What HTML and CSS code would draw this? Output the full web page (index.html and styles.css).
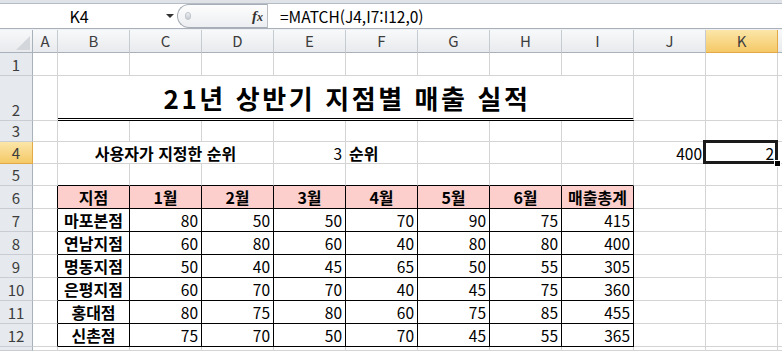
FILE: index.html
```html
<!DOCTYPE html>
<html lang="ko">
<head>
    <meta charset="UTF-8">
    <meta name="viewport" content="width=device-width, initial-scale=1.0">
    <title>21년 상반기 지점별 매출 실적</title>
    <link rel="stylesheet" href="styles.css">
</head>
<body>
    <div class="topband"></div>
    <div class="formula-bar">
        <div class="name-box">
            <span class="name-text">K4</span>
            <span class="dropdown"></span>
        </div>
        <div class="fx-pill">
            <span class="knob"></span>
            <span class="fx">f<span class="fx-x">x</span></span>
        </div>
        <div class="formula">=MATCH(J4,I7:I12,0)</div>
    </div>
    <div class="bar-gap"></div>

    <div class="sheet">
        <!-- column headers -->
        <div class="corner">
            <svg width="14" height="14" viewBox="0 0 14 14"><polygon points="14,0 14,14 0,14" fill="#d3d7dc"/></svg>
        </div>
        <div class="ch">A</div>
        <div class="ch">B</div>
        <div class="ch">C</div>
        <div class="ch">D</div>
        <div class="ch">E</div>
        <div class="ch">F</div>
        <div class="ch">G</div>
        <div class="ch">H</div>
        <div class="ch">I</div>
        <div class="ch">J</div>
        <div class="ch sel">K</div>
        <div class="ch"></div>

        <!-- row 1 -->
        <div class="rh">1</div>
        <div></div><div></div><div></div><div></div><div></div><div></div>
        <div></div><div></div><div></div><div></div><div></div><div></div>

        <!-- row 2 -->
        <div class="rh">2</div>
        <div></div>
        <div class="title">21년 상반기 지점별 매출 실적</div>
        <div></div><div></div><div></div>

        <!-- row 3 -->
        <div class="rh">3</div>
        <div></div><div></div><div></div><div></div><div></div><div></div>
        <div></div><div></div><div></div><div></div><div></div><div></div>

        <!-- row 4 -->
        <div class="rh sel">4</div>
        <div></div>
        <div class="label">사용자가 지정한 순위</div>
        <div class="num">3</div>
        <div class="bold">순위</div>
        <div></div><div></div><div></div>
        <div class="num">400</div>
        <div class="num current">2</div>
        <div></div>

        <!-- row 5 -->
        <div class="rh">5</div>
        <div></div>
        <div class="above"></div><div class="above"></div><div class="above"></div><div class="above"></div>
        <div class="above"></div><div class="above"></div><div class="above"></div><div class="above"></div>
        <div></div><div></div><div></div>

        <!-- row 6 -->
        <div class="rh">6</div>
        <div class="edge"></div>
        <div class="th tb">지점</div>
        <div class="th tb">1월</div>
        <div class="th tb">2월</div>
        <div class="th tb">3월</div>
        <div class="th tb">4월</div>
        <div class="th tb">5월</div>
        <div class="th tb">6월</div>
        <div class="th tb">매출총계</div>
        <div></div><div></div><div></div>

        <!-- row 7 -->
        <div class="rh">7</div>
        <div class="edge"></div>
        <div class="name tb">마포본점</div>
        <div class="num tb">80</div><div class="num tb">50</div><div class="num tb">50</div>
        <div class="num tb">70</div><div class="num tb">90</div><div class="num tb">75</div>
        <div class="num tb">415</div>
        <div></div><div></div><div></div>

        <!-- row 8 -->
        <div class="rh">8</div>
        <div class="edge"></div>
        <div class="name tb">연남지점</div>
        <div class="num tb">60</div><div class="num tb">80</div><div class="num tb">60</div>
        <div class="num tb">40</div><div class="num tb">80</div><div class="num tb">80</div>
        <div class="num tb">400</div>
        <div></div><div></div><div></div>

        <!-- row 9 -->
        <div class="rh">9</div>
        <div class="edge"></div>
        <div class="name tb">명동지점</div>
        <div class="num tb">50</div><div class="num tb">40</div><div class="num tb">45</div>
        <div class="num tb">65</div><div class="num tb">50</div><div class="num tb">55</div>
        <div class="num tb">305</div>
        <div></div><div></div><div></div>

        <!-- row 10 -->
        <div class="rh">10</div>
        <div class="edge"></div>
        <div class="name tb">은평지점</div>
        <div class="num tb">60</div><div class="num tb">70</div><div class="num tb">70</div>
        <div class="num tb">40</div><div class="num tb">45</div><div class="num tb">75</div>
        <div class="num tb">360</div>
        <div></div><div></div><div></div>

        <!-- row 11 -->
        <div class="rh">11</div>
        <div class="edge"></div>
        <div class="name tb">홍대점</div>
        <div class="num tb">80</div><div class="num tb">75</div><div class="num tb">80</div>
        <div class="num tb">60</div><div class="num tb">75</div><div class="num tb">85</div>
        <div class="num tb">455</div>
        <div></div><div></div><div></div>

        <!-- row 12 -->
        <div class="rh">12</div>
        <div class="edge"></div>
        <div class="name tb">신촌점</div>
        <div class="num tb">75</div><div class="num tb">70</div><div class="num tb">50</div>
        <div class="num tb">70</div><div class="num tb">45</div><div class="num tb">55</div>
        <div class="num tb">365</div>
        <div></div><div></div><div></div>

        <!-- row 13 (cut off) -->
        <div class="rh"></div>
        <div></div><div></div><div></div><div></div><div></div><div></div>
        <div></div><div></div><div></div><div></div><div></div><div></div>
    </div>
</body>
</html>
```

FILE: styles.css
```css
body {
    margin: 0;
    padding: 0;
    background-color: #fff;
    font-family: "Noto Sans CJK KR", "Noto Sans", sans-serif;
    color: #000;
    overflow: hidden;
}

/* formula bar */

.topband {
    height: 3px;
    background-color: #dfe3e8;
    border-bottom: 1px solid #b5bcc5;
}

.formula-bar {
    display: flex;
    height: 24px;
    border-bottom: 1px solid #a9b0b9;
}

.bar-gap {
    height: 1px;
    background-color: #eef0f3;
}

.name-box {
    width: 176px;
    display: flex;
    align-items: center;
}

.name-text {
    width: 158px;
    text-align: center;
    font-size: 16px;
    line-height: 24px;
}

.dropdown {
    margin-left: 8px;
    width: 0;
    height: 0;
    border-left: 4px solid transparent;
    border-right: 4px solid transparent;
    border-top: 4px solid #333;
}

.fx-pill {
    width: 90px;
    height: 24px;
    box-sizing: border-box;
    margin-left: 1px;
    border: 1px solid #a7adb5;
    border-right: none;
    border-radius: 12px 0 0 12px;
    background: linear-gradient(#fdfdfd, #eceef1);
    display: flex;
    align-items: center;
    justify-content: space-between;
    padding: 0 4px 0 7px;
}

.knob {
    width: 6px;
    height: 8px;
    border-radius: 3px;
    background: linear-gradient(#eef0f2, #c5cad0);
    border: 1px solid #c0c5cb;
    box-sizing: border-box;
}

.fx {
    font-family: "Liberation Serif", serif;
    font-style: italic;
    font-weight: bold;
    font-size: 15px;
    color: #333;
}

.fx-x {
    font-size: 12px;
}

.formula {
    flex: 1;
    border-left: 1px solid #b9bec5;
    padding-left: 12px;
    font-size: 15.5px;
    line-height: 24px;
    white-space: nowrap;
}

/* sheet grid */

.sheet {
    display: grid;
    grid-template-columns: 33px 25px repeat(10, 72px) 1fr;
    grid-template-rows: 23px 23px 45px 21px 22px 22px repeat(7, 23px) 1fr;
    height: 321px;
}

.sheet > div {
    box-sizing: border-box;
    border-right: 1px solid #d4d4d4;
    border-bottom: 1px solid #d4d4d4;
    overflow: hidden;
    white-space: nowrap;
    display: flex;
    align-items: center;
    padding: 0 3px;
    font-size: 15.5px;
    line-height: 18px;
}

.sheet > .corner {
    background: linear-gradient(#f7f8f9, #e8eaed);
    border-right: 1px solid #a9b1ba;
    border-bottom: 1px solid #a9b1ba;
    justify-content: flex-end;
    align-items: flex-end;
    padding: 0 2px 2px 0;
}

.corner svg {
    display: block;
}

.sheet > .ch {
    background: linear-gradient(#f8f9fa, #e8eaed);
    border-right: 1px solid #c6cbd1;
    border-bottom: 1px solid #a9b1ba;
    justify-content: center;
    color: #3d3d3d;
    font-size: 15px;
}

.sheet > .rh {
    background-color: #e6e9ed;
    border-right: 1px solid #a9b1ba;
    border-bottom: 1px solid #c9cdd3;
    justify-content: center;
    align-items: flex-end;
    color: #3d3d3d;
    padding-bottom: 1px;
    font-size: 15px;
}

.sheet > .sel {
    background: linear-gradient(#fbe6a9, #f5c967);
    border-right-color: #e3a946;
    border-bottom-color: #e3a946;
}

/* cell contents */

.sheet > .title {
    grid-column: span 8;
    justify-content: center;
    align-items: flex-end;
    font-size: 26px;
    font-weight: 700;
    letter-spacing: 2.6px;
    line-height: 34px;
    padding: 0 0 3px 3px;
    border-bottom: 3px double #000;
}

.sheet > .label {
    grid-column: span 3;
    justify-content: center;
    font-weight: 700;
    font-size: 16px;
}

.sheet > .num {
    justify-content: flex-end;
}

.sheet > .bold {
    font-weight: 700;
    font-size: 16px;
}

.sheet > .above {
    border-bottom-color: #000;
}

.sheet > .edge {
    border-right-color: #000;
}

.sheet > .tb {
    border-right-color: #000;
    border-bottom-color: #000;
}

.sheet > .th {
    background-color: #fdcfcc;
    justify-content: center;
    font-weight: 700;
    font-size: 16px;
}

.sheet > .name {
    justify-content: center;
    font-weight: 700;
    font-size: 16px;
}

/* active cell */

.sheet > .current {
    position: relative;
    overflow: visible;
}

.current::after {
    content: "";
    position: absolute;
    left: -3px;
    right: -1px;
    top: -2px;
    bottom: -1px;
    border: 3px solid #1a1a1a;
}

.current::before {
    content: "";
    position: absolute;
    right: -3px;
    bottom: -3px;
    width: 5px;
    height: 5px;
    background-color: #000;
    outline: 1px solid #fff;
    z-index: 1;
}
```
